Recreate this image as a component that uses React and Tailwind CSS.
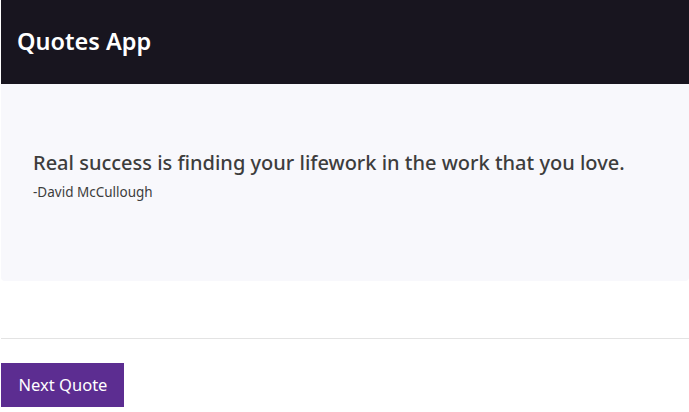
const quote = {
    text: "Real success is finding your lifework in the work that you love.",
    author: "David McCullough",
};

const App = () => {
    return (
        <div className="min-h-screen bg-white pl-px font-['Noto_Sans',sans-serif]">
            {/* Header */}
            <header className="h-[84px] bg-[#18151f] flex items-center px-4">
                <h1 className="text-[23.5px] font-semibold text-white leading-none">Quotes App</h1>
            </header>

            {/* Quote card */}
            <section className="h-[197px] bg-[#f8f8fc] rounded-b-[4px] px-8 pt-[66px]">
                <p className="text-[20px] font-medium text-[#3d3d3d] leading-[26px]">{quote.text}</p>
                <p className="text-[13.5px] text-[#3d3d3d] leading-[18px] mt-[7px]">-{quote.author}</p>
            </section>

            {/* Divider */}
            <div className="mt-[57px] border-t border-[#e3e3e3]" />

            {/* Action */}
            <div className="mt-[24px]">
                <button className="h-[44px] w-[123px] bg-[#5c2d91] text-white text-[16.5px] leading-none pl-px">
                    Next Quote
                </button>
            </div>
        </div>
    );
};

export default App;
